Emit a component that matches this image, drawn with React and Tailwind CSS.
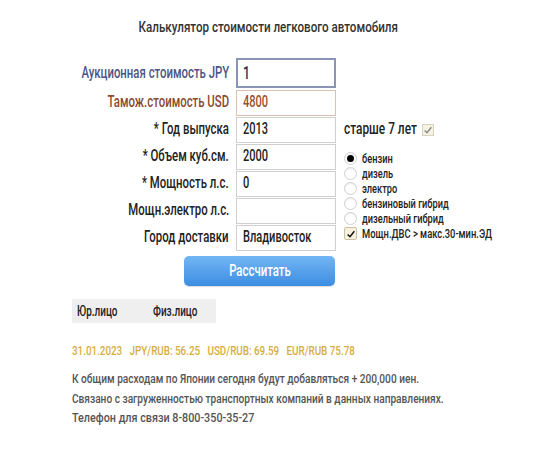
import React from "react";

const Check = ({ color }) => (
  <svg viewBox="0 0 12 12" className="w-[10px] h-[10px]">
    <path d="M2 6.5 L4.8 9.2 L10 2.8" fill="none" stroke={color} strokeWidth="1.8" />
  </svg>
);

const Radio = ({ checked, label }) => (
  <div className="flex items-center h-[15px]">
    <span className="w-[13px] h-[13px] rounded-full border border-[#d0d0d0] bg-white flex items-center justify-center shadow-[inset_0_1px_1px_rgba(0,0,0,0.08)]">
      {checked && <span className="w-[7px] h-[7px] rounded-full bg-black" />}
    </span>
    <span className="ml-[5px] inline-block whitespace-nowrap origin-left scale-x-[0.77] text-[12px] text-[#222] leading-none">{label}</span>
  </div>
);

const Row = ({ label, labelColor = "text-[#222]", children, h = "h-[27px]" }) => (
  <div className={`flex items-center ${h}`}>
    <div className={`w-[229px] text-right text-[16.5px] ${labelColor}`}>
      <span className="inline-block whitespace-nowrap origin-right scale-x-[0.69]">{label}</span>
    </div>
    <div className="ml-[7px]">{children}</div>
  </div>
);

const Input = ({ value, cls = "border-[#cfcfcf] text-[#222]" }) => (
  <div className={`w-[100px] h-[26px] border ${cls} bg-white flex items-center pl-[6px] text-[16.5px]`}>
    <span className="inline-block whitespace-nowrap origin-left scale-x-[0.67]">{value}</span>
  </div>
);

export default function App() {
  return (
    <div className="w-[548px] h-[450px] bg-white font-['Roboto',sans-serif] font-medium overflow-hidden">
      <div className="pt-[17px] pr-[12px] text-center text-[14px] text-[#333]">
        <span className="inline-block whitespace-nowrap origin-center scale-x-[0.83]">Калькулятор стоимости легкового автомобиля</span>
      </div>
      <div className="flex mt-[19px]">
        <div className="flex flex-col">
          <Row label="Аукционная стоимость JPY" labelColor="text-[#4b5585]" h="h-[32px]">
            <div className="w-[100px] h-[30px] border-2 border-[#8a94b4] bg-white flex items-center pl-[5px] text-[17.5px] text-[#2d3350]">
              <span className="inline-block whitespace-nowrap origin-left scale-x-[0.7]">1</span>
            </div>
          </Row>
          <Row label="Тамож.стоимость USD" labelColor="text-[#8b4a2e]">
            <Input value="4800" cls="border-[#dcc0b0] text-[#9b4f2c]" />
          </Row>
          <Row label="* Год выпуска"><Input value="2013" /></Row>
          <Row label="* Объем куб.см."><Input value="2000" /></Row>
          <Row label="* Мощность л.с."><Input value="0" /></Row>
          <Row label="Мощн.электро л.с."><Input value="" /></Row>
          <Row label="Город доставки">
            <div className="w-[100px] h-[26px] border border-[#cfcfcf] bg-white flex items-center justify-between pl-[6px] pr-[4px] text-[16.5px] text-[#222]">
              <span className="inline-block whitespace-nowrap origin-left scale-x-[0.67]">Владивосток</span>
              <svg viewBox="0 0 10 10" className="w-[9px] h-[9px]"><path d="M1.5 3 L5 6.5 L8.5 3" fill="none" stroke="#111" strokeWidth="2" /></svg>
            </div>
          </Row>
          <div className="flex mt-[5px]">
            <div className="w-[184px]" />
            <div className="w-[151px] h-[30px] rounded-[5px] bg-gradient-to-b from-[#72b6f4] to-[#3c8de2] text-white text-[17px] flex items-center justify-center shadow-[0_1px_1px_rgba(0,0,0,0.15)]">
              <span className="inline-block whitespace-nowrap origin-center scale-x-[0.67]">Рассчитать</span>
            </div>
          </div>
        </div>
        <div className="flex flex-col ml-[8px] pt-[59px]">
          <div className="flex items-center h-[27px] text-[16.5px] text-[#222]">
            <div className="w-[76px]">
              <span className="inline-block whitespace-nowrap origin-left scale-x-[0.72]">старше 7 лет</span>
            </div>
            <span className="ml-[2px] w-[12px] h-[12px] border border-[#d8d2bf] bg-[#f6f2e2] flex items-center justify-center"><Check color="#8a8a8a" /></span>
          </div>
          <div className="mt-[8px] flex flex-col">
            <Radio checked label="бензин" />
            <Radio label="дизель" />
            <Radio label="электро" />
            <Radio label="бензиновый гибрид" />
            <Radio label="дизельный гибрид" />
            <div className="flex items-center h-[15px]">
              <span className="w-[13px] h-[13px] border border-[#c9c0a5] bg-[#f8f1dc] rounded-[2px] flex items-center justify-center"><Check color="#111" /></span>
              <span className="ml-[5px] inline-block whitespace-nowrap origin-left scale-x-[0.72] text-[13px] text-[#222] leading-none">Мощн.ДВС &gt; макс.30-мин.ЭД</span>
            </div>
          </div>
        </div>
      </div>
      <div className="ml-[72px] mt-[13px] w-[144px] h-[24px] bg-[#efefef] flex items-center text-[14px] text-[#222]">
        <span className="ml-[5px] w-[80px]"><span className="inline-block whitespace-nowrap origin-left scale-x-[0.71]">Юр.лицо</span></span>
        <span className="inline-block whitespace-nowrap origin-left scale-x-[0.71]">Физ.лицо</span>
      </div>
      <div className="ml-[72px] mt-[19px] text-[12px] text-[#d6ad42]">
        <span className="inline-block whitespace-pre origin-left scale-x-[0.82]">31.01.2023   JPY/RUB: 56.25   USD/RUB: 69.59   EUR/RUB 75.78</span>
      </div>
      <div className="ml-[72px] mt-[9px] text-[13px] leading-[19.5px] text-[#555] flex flex-col items-start">
        <span className="inline-block whitespace-nowrap origin-left scale-x-[0.78]">К общим расходам по Японии сегодня будут добавляться + 200,000 иен.</span>
        <span className="inline-block whitespace-nowrap origin-left scale-x-[0.779]">Связано с загруженностью транспортных компаний в данных направлениях.</span>
        <span className="inline-block whitespace-nowrap origin-left scale-x-[0.83]">Телефон для связи 8-800-350-35-27</span>
      </div>
    </div>
  );
}
